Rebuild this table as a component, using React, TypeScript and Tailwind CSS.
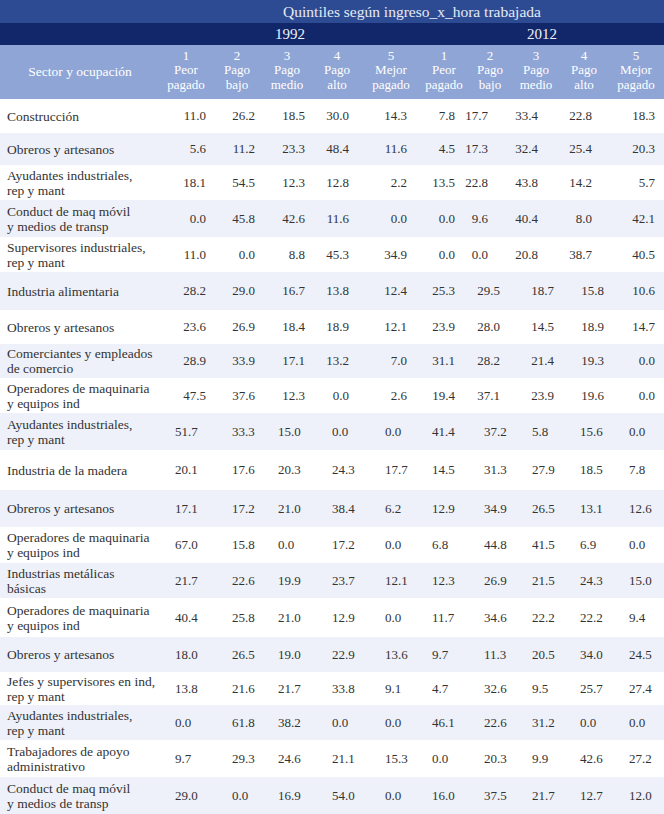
import React from 'react'

type Mode = 'r' | 'm' | 'l'

interface Row {
  label: string
  h: string
  mode: Mode
  alt: boolean
  values: string[]
}

// column widths and per-mode padding, written out so tailwind picks them up
const cols = [
  { w: 'w-[52px]', r: 'pr-[6px]', m: 'pr-[6px]', l: 'pl-[15px]' },
  { w: 'w-[50px]', r: 'pr-[7px]', m: 'pr-[7px]', l: 'pl-[20px]' },
  { w: 'w-[50px]', r: 'pr-[7px]', m: 'pr-[7px]', l: 'pl-[16px]' },
  { w: 'w-[50px]', r: 'pr-[13px]', m: 'pr-[13px]', l: 'pl-[20px]' },
  { w: 'w-[58px]', r: 'pr-[13px]', m: 'pr-[13px]', l: 'pl-[23px]' },
  { w: 'w-[48px]', r: 'pr-[13px]', m: 'pr-[13px]', l: 'pl-[12px]' },
  { w: 'w-[44px]', r: 'pr-[24px]', m: 'pr-[12px]', l: 'pl-[16px]' },
  { w: 'w-[48px]', r: 'pr-[22px]', m: 'pr-[6px]', l: 'pl-[20px]' },
  { w: 'w-[48px]', r: 'pr-[16px]', m: 'pr-[4px]', l: 'pl-[20px]' },
  { w: 'w-[56px]', r: 'pr-[9px]', m: 'pr-[9px]', l: 'pl-[21px]' },
]

const quintiles = [
  ['1', 'Peor', 'pagado'],
  ['2', 'Pago', 'bajo'],
  ['3', 'Pago', 'medio'],
  ['4', 'Pago', 'alto'],
  ['5', 'Mejor', 'pagado'],
]

const rows: Row[] = [
  { label: 'Construcción', h: 'h-[34px]', mode: 'r', alt: false, values: ['11.0', '26.2', '18.5', '30.0', '14.3', '7.8', '17.7', '33.4', '22.8', '18.3'] },
  { label: 'Obreros y artesanos', h: 'h-[32px]', mode: 'r', alt: true, values: ['5.6', '11.2', '23.3', '48.4', '11.6', '4.5', '17.3', '32.4', '25.4', '20.3'] },
  { label: 'Ayudantes industriales,\nrep y mant', h: 'h-[35px]', mode: 'r', alt: false, values: ['18.1', '54.5', '12.3', '12.8', '2.2', '13.5', '22.8', '43.8', '14.2', '5.7'] },
  { label: 'Conduct de maq móvil\ny medios de transp', h: 'h-[37px]', mode: 'r', alt: true, values: ['0.0', '45.8', '42.6', '11.6', '0.0', '0.0', '9.6', '40.4', '8.0', '42.1'] },
  { label: 'Supervisores industriales,\nrep y mant', h: 'h-[35px]', mode: 'r', alt: false, values: ['11.0', '0.0', '8.8', '45.3', '34.9', '0.0', '0.0', '20.8', '38.7', '40.5'] },
  { label: 'Industria alimentaria', h: 'h-[38px]', mode: 'm', alt: true, values: ['28.2', '29.0', '16.7', '13.8', '12.4', '25.3', '29.5', '18.7', '15.8', '10.6'] },
  { label: 'Obreros y artesanos', h: 'h-[34px]', mode: 'm', alt: false, values: ['23.6', '26.9', '18.4', '18.9', '12.1', '23.9', '28.0', '14.5', '18.9', '14.7'] },
  { label: 'Comerciantes y empleados\nde comercio', h: 'h-[34px]', mode: 'm', alt: true, values: ['28.9', '33.9', '17.1', '13.2', '7.0', '31.1', '28.2', '21.4', '19.3', '0.0'] },
  { label: 'Operadores de maquinaria\ny equipos ind', h: 'h-[35px]', mode: 'm', alt: false, values: ['47.5', '37.6', '12.3', '0.0', '2.6', '19.4', '37.1', '23.9', '19.6', '0.0'] },
  { label: 'Ayudantes industriales,\nrep y mant', h: 'h-[37px]', mode: 'l', alt: true, values: ['51.7', '33.3', '15.0', '0.0', '0.0', '41.4', '37.2', '5.8', '15.6', '0.0'] },
  { label: 'Industria de la madera', h: 'h-[40px]', mode: 'l', alt: false, values: ['20.1', '17.6', '20.3', '24.3', '17.7', '14.5', '31.3', '27.9', '18.5', '7.8'] },
  { label: 'Obreros y artesanos', h: 'h-[37px]', mode: 'l', alt: true, values: ['17.1', '17.2', '21.0', '38.4', '6.2', '12.9', '34.9', '26.5', '13.1', '12.6'] },
  { label: 'Operadores de maquinaria\ny equipos ind', h: 'h-[36px]', mode: 'l', alt: false, values: ['67.0', '15.8', '0.0', '17.2', '0.0', '6.8', '44.8', '41.5', '6.9', '0.0'] },
  { label: 'Industrias metálicas\nbásicas', h: 'h-[35px]', mode: 'l', alt: true, values: ['21.7', '22.6', '19.9', '23.7', '12.1', '12.3', '26.9', '21.5', '24.3', '15.0'] },
  { label: 'Operadores de maquinaria\ny equipos ind', h: 'h-[39px]', mode: 'l', alt: false, values: ['40.4', '25.8', '21.0', '12.9', '0.0', '11.7', '34.6', '22.2', '22.2', '9.4'] },
  { label: 'Obreros y artesanos', h: 'h-[35px]', mode: 'l', alt: true, values: ['18.0', '26.5', '19.0', '22.9', '13.6', '9.7', '11.3', '20.5', '34.0', '24.5'] },
  { label: 'Jefes y supervisores en ind,\nrep y mant', h: 'h-[33px]', mode: 'l', alt: false, values: ['13.8', '21.6', '21.7', '33.8', '9.1', '4.7', '32.6', '9.5', '25.7', '27.4'] },
  { label: 'Ayudantes industriales,\nrep y mant', h: 'h-[35px]', mode: 'l', alt: true, values: ['0.0', '61.8', '38.2', '0.0', '0.0', '46.1', '22.6', '31.2', '0.0', '0.0'] },
  { label: 'Trabajadores de apoyo\nadministrativo', h: 'h-[37px]', mode: 'l', alt: false, values: ['9.7', '29.3', '24.6', '21.1', '15.3', '0.0', '20.3', '9.9', '42.6', '27.2'] },
  { label: 'Conduct de maq móvil\ny medios de transp', h: 'h-[37px]', mode: 'l', alt: true, values: ['29.0', '0.0', '16.9', '54.0', '0.0', '16.0', '37.5', '21.7', '12.7', '12.0'] },
]

export default function App() {
  return (
    <div className="w-[664px] h-[814px] overflow-hidden bg-white text-[13px] text-[#333333] font-['Liberation_Serif']">
      {/* Title band */}
      <div className="flex h-[23px] bg-[#2d4b93]">
        <div className="w-[160px]" />
        <div className="flex-1 flex items-center justify-center text-[15.5px] text-[#e6eaf4]">
          Quintiles según ingreso_x_hora trabajada
        </div>
      </div>

      {/* Years */}
      <div className="flex h-[22px] bg-[#12276a] text-[15px] text-[#eef1f8]">
        <div className="w-[160px]" />
        <div className="w-[260px] flex items-center justify-center">1992</div>
        <div className="w-[244px] flex items-center justify-center">2012</div>
      </div>

      {/* Column headers */}
      <div className="flex h-[54px] bg-[#8fa5d5] text-white leading-[14.5px]">
        <div className="w-[160px] flex items-center justify-center pt-[1px] text-[13.5px]">Sector y ocupación</div>
        {[...quintiles, ...quintiles].map((q, i) => (
          <div key={i} className={`${cols[i].w} flex flex-col items-center justify-center pb-[3px]`}>
            <span>{q[0]}</span>
            <span>{q[1]}</span>
            <span>{q[2]}</span>
          </div>
        ))}
      </div>

      {/* Body */}
      {rows.map((row, ri) => (
        <div key={ri} className={`flex ${row.h} ${row.alt ? 'bg-[#eef1f9]' : 'bg-white'}`}>
          <div className="w-[160px] pl-[7px] flex items-center whitespace-pre-line leading-[15px] text-[13.5px]">
            {row.label}
          </div>
          {row.values.map((v, ci) => (
            <div
              key={ci}
              className={`${cols[ci].w} flex items-center ${row.mode === 'l' ? 'justify-start' : 'justify-end'} ${cols[ci][row.mode]}`}
            >
              {v}
            </div>
          ))}
        </div>
      ))}
    </div>
  )
}
